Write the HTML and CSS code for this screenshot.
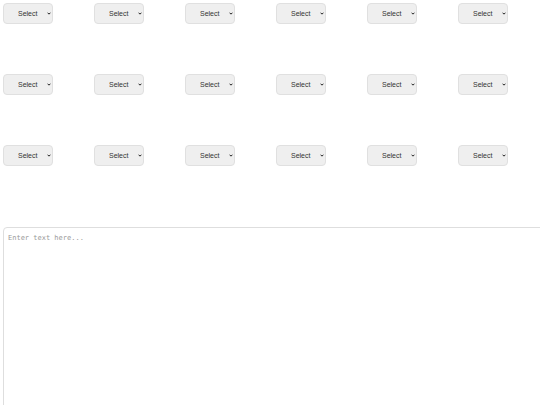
FILE: index.html
```html
<!DOCTYPE html>
<html>
<head>
<meta charset="utf-8">
<link rel="stylesheet" href="styles.css">
</head>
<body>
<div class="grid">
  <div class="cell"><select class="sel"><option>Select</option></select><svg class="chev" viewBox="0 0 6 4"><path d="M0.8 0.8 L3 3 L5.2 0.8" /></svg></div>
  <div class="cell"><select class="sel"><option>Select</option></select><svg class="chev" viewBox="0 0 6 4"><path d="M0.8 0.8 L3 3 L5.2 0.8" /></svg></div>
  <div class="cell"><select class="sel"><option>Select</option></select><svg class="chev" viewBox="0 0 6 4"><path d="M0.8 0.8 L3 3 L5.2 0.8" /></svg></div>
  <div class="cell"><select class="sel"><option>Select</option></select><svg class="chev" viewBox="0 0 6 4"><path d="M0.8 0.8 L3 3 L5.2 0.8" /></svg></div>
  <div class="cell"><select class="sel"><option>Select</option></select><svg class="chev" viewBox="0 0 6 4"><path d="M0.8 0.8 L3 3 L5.2 0.8" /></svg></div>
  <div class="cell"><select class="sel"><option>Select</option></select><svg class="chev" viewBox="0 0 6 4"><path d="M0.8 0.8 L3 3 L5.2 0.8" /></svg></div>
  <div class="cell"><select class="sel"><option>Select</option></select><svg class="chev" viewBox="0 0 6 4"><path d="M0.8 0.8 L3 3 L5.2 0.8" /></svg></div>
  <div class="cell"><select class="sel"><option>Select</option></select><svg class="chev" viewBox="0 0 6 4"><path d="M0.8 0.8 L3 3 L5.2 0.8" /></svg></div>
  <div class="cell"><select class="sel"><option>Select</option></select><svg class="chev" viewBox="0 0 6 4"><path d="M0.8 0.8 L3 3 L5.2 0.8" /></svg></div>
  <div class="cell"><select class="sel"><option>Select</option></select><svg class="chev" viewBox="0 0 6 4"><path d="M0.8 0.8 L3 3 L5.2 0.8" /></svg></div>
  <div class="cell"><select class="sel"><option>Select</option></select><svg class="chev" viewBox="0 0 6 4"><path d="M0.8 0.8 L3 3 L5.2 0.8" /></svg></div>
  <div class="cell"><select class="sel"><option>Select</option></select><svg class="chev" viewBox="0 0 6 4"><path d="M0.8 0.8 L3 3 L5.2 0.8" /></svg></div>
  <div class="cell"><select class="sel"><option>Select</option></select><svg class="chev" viewBox="0 0 6 4"><path d="M0.8 0.8 L3 3 L5.2 0.8" /></svg></div>
  <div class="cell"><select class="sel"><option>Select</option></select><svg class="chev" viewBox="0 0 6 4"><path d="M0.8 0.8 L3 3 L5.2 0.8" /></svg></div>
  <div class="cell"><select class="sel"><option>Select</option></select><svg class="chev" viewBox="0 0 6 4"><path d="M0.8 0.8 L3 3 L5.2 0.8" /></svg></div>
  <div class="cell"><select class="sel"><option>Select</option></select><svg class="chev" viewBox="0 0 6 4"><path d="M0.8 0.8 L3 3 L5.2 0.8" /></svg></div>
  <div class="cell"><select class="sel"><option>Select</option></select><svg class="chev" viewBox="0 0 6 4"><path d="M0.8 0.8 L3 3 L5.2 0.8" /></svg></div>
  <div class="cell"><select class="sel"><option>Select</option></select><svg class="chev" viewBox="0 0 6 4"><path d="M0.8 0.8 L3 3 L5.2 0.8" /></svg></div>
</div>
<textarea class="editor" placeholder="Enter text here..."></textarea>
</body>
</html>
```
FILE: styles.css
```css
html, body {
  margin: 0;
  padding: 0;
  background: #ffffff;
  overflow: hidden;
}
.grid {
  display: grid;
  grid-template-columns: repeat(6, 91px);
  grid-auto-rows: 71px;
  padding: 3px 0 0 3px;
}
.cell {
  position: relative;
  width: 50px;
  height: 21px;
}
.sel {
  -webkit-appearance: none;
  appearance: none;
  display: block;
  width: 50px;
  height: 21px;
  box-sizing: border-box;
  margin: 0;
  font-family: "Liberation Sans", Arial, sans-serif;
  font-size: 7px;
  color: #333;
  background-color: #efefef;
  border: 1px solid #e0e0e0;
  border-radius: 4px;
  padding: 0 4px 0 14px;
  text-align: left;
  outline: none;
}
.chev {
  position: absolute;
  left: 44px;
  top: 9px;
  width: 4px;
  height: 3px;
  pointer-events: none;
  fill: none;
  stroke: #222;
  stroke-width: 1.5;
}
.editor {
  display: block;
  margin: 11px 0 0 3px;
  width: 560px;
  height: 200px;
  box-sizing: border-box;
  border: 1px solid #dedede;
  border-radius: 4px;
  padding: 6px 4px;
  font-family: "DejaVu Sans Mono", monospace;
  font-size: 7px;
  resize: none;
  outline: none;
}
.editor::placeholder {
  color: #9a9a9a;
}
```
